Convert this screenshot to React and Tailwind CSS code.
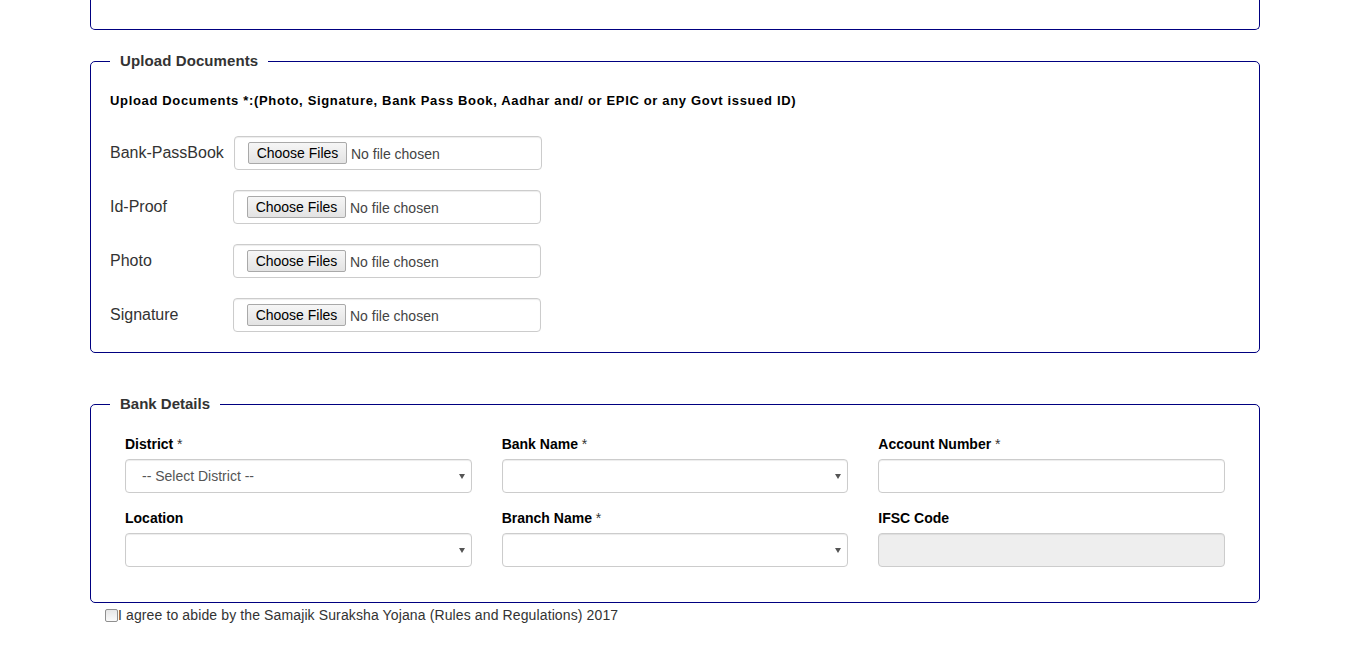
import React from 'react'

function FileBox() {
  return (
    <div className="flex h-[34px] w-[308px] items-center rounded-[4px] border border-[#ccc] pl-[13px] shadow-[inset_0_1px_1px_rgba(0,0,0,0.075)]">
      <span className="flex h-[22px] w-[99px] items-center justify-center rounded-[2px] border border-[#a9a9a9] bg-gradient-to-b from-[#f6f6f6] to-[#e3e3e3] pt-[1px] text-[14px] text-black">
        Choose Files
      </span>
      <span className="ml-[4px] pt-[2px] text-[14px] text-[#444]">No file chosen</span>
    </div>
  )
}

function Select({ text }) {
  return (
    <div className="relative flex h-[34px] items-center rounded-[4px] border border-[#ccc] bg-white pl-[16px] text-[14px] text-[#555] shadow-[inset_0_1px_1px_rgba(0,0,0,0.075)]">
      {text}
      <svg className="absolute right-[6px] top-[14px]" width="6" height="5" viewBox="0 0 6 5">
        <polygon points="0,0 6,0 3,5" fill="#555" />
      </svg>
    </div>
  )
}

function Field({ label, star, children }) {
  return (
    <div>
      <div className="mb-[5px] text-[14px] leading-[20px] font-bold text-black">
        {label}
        {star && <span className="font-normal text-[#333]"> *</span>}
      </div>
      {children}
    </div>
  )
}

const uploads = ['Bank-PassBook', 'Id-Proof', 'Photo', 'Signature']

export default function App() {
  return (
    <div className="min-h-[647px] bg-white font-['Liberation_Sans',Arial,sans-serif] text-[#333]">
      <div className="ml-[90px] w-[1170px]">
        <div className="h-[30px] rounded-b-[5px] border-x border-b border-[#000080]" />

        <fieldset className="mt-[21px] rounded-[5px] border border-[#000080] px-[19px] pb-[20px]">
          <legend className="px-[10px] text-[15px] leading-[20px] font-bold tracking-[0.1px] text-[#333]">Upload Documents</legend>
          <div className="mt-[21px] text-[13px] leading-[18px] font-bold tracking-[0.66px] text-black">
            Upload Documents *:(Photo, Signature, Bank Pass Book, Aadhar and/ or EPIC or any Govt issued ID)
          </div>
          <div className="mt-[26px] flex flex-col gap-[20px]">
            {uploads.map((u, i) => (
              <div key={u} className="flex h-[34px] items-center">
                <label className={`${i === 0 ? 'w-[124px]' : 'w-[123px]'} text-[16px] text-[#333]`}>{u}</label>
                <FileBox />
              </div>
            ))}
          </div>
        </fieldset>

        <fieldset className="mt-[41px] rounded-[5px] border border-[#000080] px-[19px] pb-[35px]">
          <legend className="px-[10px] text-[15px] leading-[20px] font-bold text-[#333]">Bank Details</legend>
          <div className="mt-[20px] grid grid-cols-3 gap-x-[30px] gap-y-[15px] px-[15px]">
            <Field label="District" star>
              <Select text="-- Select District --" />
            </Field>
            <Field label="Bank Name" star>
              <Select />
            </Field>
            <Field label="Account Number" star>
              <div className="h-[34px] rounded-[4px] border border-[#ccc] bg-white shadow-[inset_0_1px_1px_rgba(0,0,0,0.075)]" />
            </Field>
            <Field label="Location">
              <Select />
            </Field>
            <Field label="Branch Name" star>
              <Select />
            </Field>
            <Field label="IFSC Code">
              <div className="h-[34px] rounded-[4px] border border-[#ccc] bg-[#eee] shadow-[inset_0_1px_1px_rgba(0,0,0,0.075)]" />
            </Field>
          </div>
        </fieldset>

        <label className="mt-[2px] ml-[15px] flex items-center text-[14px] leading-[20px] tracking-[0.12px] text-[#333]">
          <span className="h-[13px] w-[13px] rounded-[2px] border border-[#8f8f8f] bg-gradient-to-b from-[#e6e6e6] to-[#fafafa]" />
          I agree to abide by the Samajik Suraksha Yojana (Rules and Regulations) 2017
        </label>
      </div>
    </div>
  )
}
